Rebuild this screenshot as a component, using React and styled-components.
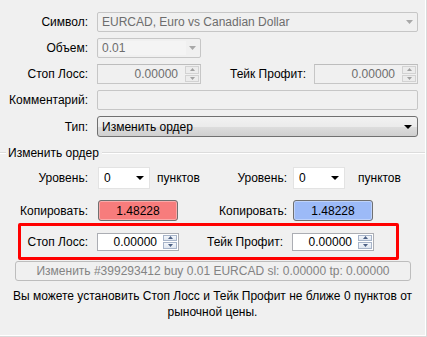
import React from 'react';
import styled, { createGlobalStyle } from 'styled-components';

const GlobalStyle = createGlobalStyle`
  html, body { margin: 0; padding: 0; background: #f0f0f0; }
  body {
    font-family: "Liberation Sans", Arial, sans-serif;
    font-size: 12px;
    color: #000;
  }
`;

const Window = styled.div`
  width: 427px;
  height: 337px;
  box-sizing: border-box;
  padding-top: 12px;
  background: #f0f0f0;
  box-shadow: inset -1px -1px 0 #dadada, inset -2px -2px 0 #ffffff;
`;

const Row = styled.div`
  display: flex;
  align-items: center;
  height: ${p => p.h || 20}px;
  margin-bottom: ${p => (p.mb === undefined ? 6 : p.mb)}px;
`;

const Label = styled.div`
  width: ${p => p.w}px;
  margin-right: ${p => (p.gap === undefined ? 9 : p.gap)}px;
  flex-shrink: 0;
  text-align: right;
  white-space: nowrap;
`;

const Half = styled.div`
  display: flex;
  align-items: center;
  width: ${p => p.w}px;
  flex-shrink: 0;
`;

const Units = styled.span`
  margin-left: ${p => p.gap}px;
`;

const Field = styled.div`
  position: relative;
  display: flex;
  align-items: center;
  box-sizing: border-box;
  width: ${p => p.w}px;
  height: ${p => p.h || 20}px;
  border: 1px solid ${p => (p.active ? '#abadb3' : '#c6c6c6')};
  border-radius: 2px;
  background: ${p => (p.active ? '#ffffff' : '#f0f0f0')};
  color: ${p => (p.active ? '#000' : '#6d6d6d')};
  padding-left: 4px;
  flex-shrink: 0;
`;

const FieldText = styled.span`
  flex: 1;
  white-space: nowrap;
  overflow: hidden;
`;

const InnerEdit = styled.div`
  flex: 1;
  align-self: stretch;
  margin: 2px 14px 2px -1px;
  padding-left: 3px;
  display: flex;
  align-items: center;
  background: #f4f4f4;
`;

const ArrowBox = styled.span`
  width: 16px;
  display: flex;
  justify-content: center;
  align-items: center;
  flex-shrink: 0;
`;

const TypeCombo = styled.div`
  display: flex;
  align-items: center;
  box-sizing: border-box;
  width: 321px;
  height: 21px;
  padding-left: 4px;
  border: 1px solid #707070;
  border-radius: 3px;
  background: linear-gradient(#f2f2f2 0%, #ebebeb 50%, #dddddd 51%, #cfcfcf 100%);
`;

const LevelCombo = styled.div`
  display: flex;
  align-items: center;
  box-sizing: border-box;
  width: 52px;
  height: 22px;
  padding-left: 5px;
  border: 1px solid #e3e3e3;
  background: #fff;
  flex-shrink: 0;
`;

const ColorButton = styled.div`
  box-sizing: border-box;
  width: 80px;
  height: 21px;
  display: flex;
  align-items: center;
  justify-content: center;
  border: 1px solid #707070;
  border-radius: 3px;
  background: ${p => p.bg};
  box-shadow: inset 0 0 0 1px rgba(255, 255, 255, 0.35);
  flex-shrink: 0;
`;

const Spin = styled.div`
  display: flex;
  align-items: stretch;
  box-sizing: border-box;
  width: ${p => p.w}px;
  height: ${p => p.h}px;
  border: 1px solid ${p => (p.active ? '#abadb3' : '#c6c6c6')};
  border-top-color: ${p => (p.active ? '#abadb3' : '#bdbdbd')};
  background: ${p => (p.active ? '#fff' : '#f0f0f0')};
  color: ${p => (p.active ? '#000' : '#6d6d6d')};
  flex-shrink: 0;
`;

const SpinValue = styled.div`
  flex: 1;
  display: flex;
  align-items: center;
  justify-content: flex-end;
  padding-right: ${p => p.pr}px;
`;

const SpinButtons = styled.div`
  width: 14px;
  display: flex;
  flex-direction: column;
  gap: 1px;
  padding: 1px 1px 1px 0;
`;

const SpinBtn = styled.div`
  flex: 1;
  display: flex;
  align-items: center;
  justify-content: center;
  border: 1px solid ${p => (p.active ? '#a7b4c9' : '#d2d2d2')};
  background: ${p => (p.active ? 'linear-gradient(#f4f7fb, #dfe6f0)' : '#ececec')};
`;

const GroupHeader = styled.div`
  display: flex;
  align-items: center;
  height: 16px;
  margin: 8px 2px 6px 0;
`;

const GroupLine = styled.div`
  height: 0;
  border-top: 1px solid #dcdcdc;
  border-bottom: 1px solid #ffffff;
  width: ${p => (p.w ? `${p.w}px` : 'auto')};
  flex: ${p => (p.w ? '0 0 auto' : '1')};
`;

const GroupTitle = styled.span`
  padding: 0 3px 0 2px;
`;

const Highlight = styled.div`
  display: flex;
  align-items: center;
  box-sizing: border-box;
  width: 381px;
  height: 37px;
  margin: 2px 0 1px 18px;
  border: 3px solid #ff0000;
  border-radius: 2px;
`;

const ModifyButton = styled.div`
  box-sizing: border-box;
  width: 396px;
  height: 20px;
  margin-left: 15px;
  display: flex;
  align-items: center;
  justify-content: center;
  border: 1px solid #bdbdbd;
  border-radius: 3px;
  background: #f0f0f0;
  color: #838383;
  white-space: nowrap;
`;

const Note = styled.div`
  margin-top: 7px;
  text-align: center;
  line-height: 16px;
  padding-right: 2px;
`;

const Tri = ({ up, color = '#000', w = 7, h = 4 }) => (
  <svg width={w} height={h} viewBox={`0 0 ${w} ${h}`}>
    <polygon
      points={up ? `0,${h} ${w},${h} ${w / 2},0` : `0,0 ${w},0 ${w / 2},${h}`}
      fill={color}
    />
  </svg>
);

const SpinField = ({ w, h, value, active, pr }) => (
  <Spin w={w} h={h} active={active}>
    <SpinValue pr={pr}>{value}</SpinValue>
    <SpinButtons>
      <SpinBtn active={active}>
        <Tri up w={5} h={3} color={active ? '#4d6185' : '#a0a0a0'} />
      </SpinBtn>
      <SpinBtn active={active}>
        <Tri w={5} h={3} color={active ? '#4d6185' : '#a0a0a0'} />
      </SpinBtn>
    </SpinButtons>
  </Spin>
);

export default function App() {
  return (
    <Window>
      <GlobalStyle />
      <Row>
        <Label w={88}>Символ:</Label>
        <Field w={321}>
          <FieldText>EURCAD, Euro vs Canadian Dollar</FieldText>
          <ArrowBox><Tri w={7} h={4} color="#a8a8a8" /></ArrowBox>
        </Field>
      </Row>
      <Row>
        <Label w={88}>Объем:</Label>
        <Field w={104} style={{ paddingLeft: 2 }}>
          <InnerEdit>0.01</InnerEdit>
          <ArrowBox style={{ position: 'absolute', right: 0, top: 0, bottom: 0 }}>
            <Tri w={7} h={4} color="#a8a8a8" />
          </ArrowBox>
        </Field>
      </Row>
      <Row>
        <Label w={88}>Стоп Лосс:</Label>
        <SpinField w={104} h={20} value="0.00000" pr={7} />
        <Label w={105} gap={8}>Тейк Профит:</Label>
        <SpinField w={104} h={20} value="0.00000" pr={7} />
      </Row>
      <Row>
        <Label w={88}>Комментарий:</Label>
        <Field w={321} />
      </Row>
      <Row h={21} mb={0}>
        <Label w={88}>Тип:</Label>
        <TypeCombo>
          <FieldText>Изменить ордер</FieldText>
          <ArrowBox style={{ width: 18 }}><Tri w={8} h={4} /></ArrowBox>
        </TypeCombo>
      </Row>

      <GroupHeader>
        <GroupLine w={6} />
        <GroupTitle>Изменить ордер</GroupTitle>
        <GroupLine />
      </GroupHeader>

      <Row h={22} mb={11}>
        <Half w={199}>
          <Label w={88} gap={10}>Уровень:</Label>
          <LevelCombo>
            <FieldText>0</FieldText>
            <ArrowBox style={{ width: 18 }}><Tri w={8} h={4} /></ArrowBox>
          </LevelCombo>
          <Units gap={7}>пунктов</Units>
        </Half>
        <Half w={220}>
          <Label w={88} gap={6}>Уровень:</Label>
          <LevelCombo>
            <FieldText>0</FieldText>
            <ArrowBox style={{ width: 18 }}><Tri w={8} h={4} /></ArrowBox>
          </LevelCombo>
          <Units gap={13}>пунктов</Units>
        </Half>
      </Row>

      <Row h={21} mb={0}>
        <Half w={199}>
          <Label w={88} gap={10}>Копировать:</Label>
          <ColorButton bg="#f77c7c">1.48228</ColorButton>
        </Half>
        <Half w={220}>
          <Label w={88} gap={6}>Копировать:</Label>
          <ColorButton bg="#9cbaf7">1.48228</ColorButton>
        </Half>
      </Row>

      <Highlight>
        <Label w={67}>Стоп Лосс:</Label>
        <SpinField w={82} h={18} value="0.00000" active pr={6} />
        <Label w={104}>Тейк Профит:</Label>
        <SpinField w={82} h={18} value="0.00000" active pr={6} />
      </Highlight>

      <ModifyButton>Изменить #399293412 buy 0.01 EURCAD sl: 0.00000 tp: 0.00000</ModifyButton>

      <Note>
        Вы можете установить Стоп Лосс и Тейк Профит не ближе 0 пунктов от
        <br />
        рыночной цены.
      </Note>
    </Window>
  );
}
